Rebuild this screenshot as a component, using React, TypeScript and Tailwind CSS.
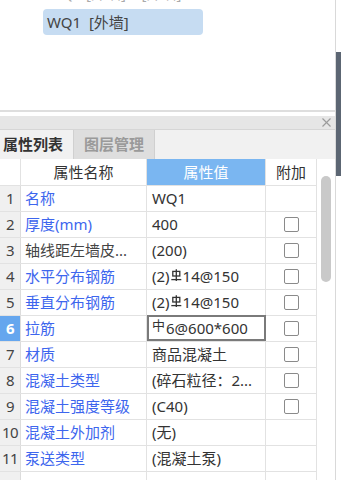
import React from "react";

const font = { fontFamily: '"Noto Sans", "Noto Sans CJK SC", sans-serif' };

function Rebar3() {
  return (
    <svg width="11" height="13" viewBox="0 0 11 13" className="inline-block -mt-[3px] mx-[1px]" fill="none" stroke="#333" strokeWidth="1.3">
      <rect x="1.8" y="2.4" width="7" height="4.6" />
      <line x1="5.3" y1="0.2" x2="5.3" y2="12" />
      <line x1="0.3" y1="10.6" x2="10.3" y2="10.6" />
    </svg>
  );
}

type Row = { name: string; value: React.ReactNode; blue: boolean; check: boolean; sel?: boolean };

const rows: Row[] = [
  { name: "名称", value: "WQ1", blue: true, check: false },
  { name: "厚度(mm)", value: "400", blue: true, check: true },
  { name: "轴线距左墙皮...", value: "(200)", blue: false, check: true },
  { name: "水平分布钢筋", value: <>(2)<Rebar3 />14@150</>, blue: true, check: true },
  { name: "垂直分布钢筋", value: <>(2)<Rebar3 />14@150</>, blue: true, check: true },
  { name: "拉筋", value: <><span className="text-[13px] relative -top-[2px] mr-[1px]">中</span>6@600*600</>, blue: true, check: true, sel: true },
  { name: "材质", value: "商品混凝土", blue: true, check: true },
  { name: "混凝土类型", value: "(碎石粒径：2...", blue: true, check: true },
  { name: "混凝土强度等级", value: "(C40)", blue: true, check: true },
  { name: "混凝土外加剂", value: "(无)", blue: true, check: false },
  { name: "泵送类型", value: "(混凝土泵)", blue: true, check: false },
];

export default function App() {
  return (
    <div className="w-[341px] h-[480px] overflow-hidden bg-white flex text-[15px] text-[#333]" style={font}>
      <div className="w-[335px] flex flex-col">
        {/* tree area */}
        <div className="h-[110px] shrink-0 bg-white">
          <div className="h-[3px] overflow-hidden">
            <div className="pl-[48px] -mt-[17px] leading-[20px] text-[#aaa]">WQ2 [外墙] &nbsp; &nbsp;[外墙]</div>
          </div>
          <div className="ml-[43px] mt-[6px] w-[160px] h-[26px] rounded-[4px] bg-[#c6dcf2] pl-[4px] leading-[26px] text-[#444]">
            WQ1&nbsp; [外墙]
          </div>
        </div>
        <div className="h-[2px] bg-[#dedede] shrink-0" />
        <div className="h-[4px] bg-white shrink-0" />
        {/* panel title bar */}
        <div className="h-[14px] bg-[#e6e6e6] border-b border-[#d6d6d6] flex items-center justify-end pr-[4px] shrink-0">
          <svg width="9" height="9" viewBox="0 0 9 9" stroke="#9a9a9a" strokeWidth="1.1">
            <line x1="0.5" y1="0.5" x2="8.5" y2="8.5" />
            <line x1="8.5" y1="0.5" x2="0.5" y2="8.5" />
          </svg>
        </div>
        {/* tabs */}
        <div className="h-[29px] bg-[#f1f1f1] flex items-stretch shrink-0" style={{ fontFamily: '"Noto Sans CJK SC", sans-serif' }}>
          <div className="w-[73px] flex items-center pl-[3px] font-bold text-[#333] bg-[#f1f1f1]">属性列表</div>
          <div className="w-[82px] flex items-center justify-center font-bold text-[#9a9a9a] bg-[#dedede] border-l border-r border-[#d0d0d0]">图层管理</div>
        </div>
        {/* table */}
        <div className="flex flex-1 min-h-0">
          <div className="w-[317px] border-r border-[#e2e2e2]">
            <div className="grid grid-cols-[21px_126px_119px_50px] h-[27px] border-b border-[#e2e2e2]" style={{ fontFamily: '"Noto Sans CJK SC", sans-serif' }}>
              <div className="border-r border-[#e2e2e2] bg-white" />
              <div className="border-r border-[#e2e2e2] flex items-center justify-center">属性名称</div>
              <div className="border-r border-[#e2e2e2] bg-[#7ab6f1] text-white flex items-center justify-center">属性值</div>
              <div className="flex items-center justify-center">附加</div>
            </div>
            {rows.map((r, i) => (
              <div key={i} className="grid grid-cols-[21px_126px_119px_50px] h-[26px] border-b border-[#e2e2e2]">
                <div
                  className={
                    "border-r border-[#dcdcdc] flex items-center justify-center tracking-[-0.5px] " +
                    (r.sel ? "bg-[#65a6ee] text-white font-bold" : "bg-[#f0f0f0] text-[#444]")
                  }
                >
                  {i + 1}
                </div>
                <div className={"border-r border-[#e2e2e2] flex items-center pl-[4px] whitespace-nowrap overflow-hidden " + (r.blue ? "text-[#3d66ee]" : "text-[#444]")}>
                  {r.name}
                </div>
                <div
                  className={
                    "flex items-center whitespace-nowrap overflow-hidden " +
                    (r.sel ? "border-2 border-[#7a7a7a] pl-[3px] -mt-px" : "border-r border-[#e2e2e2] pl-[5px]")
                  }
                >
                  {r.value}
                </div>
                <div className="flex items-center justify-center">
                  {r.check && <div className="w-[15px] h-[15px] border-[1.5px] border-[#8a8a8a] rounded-[2px] bg-white" />}
                </div>
              </div>
            ))}
            <div className="grid grid-cols-[21px_126px_119px_50px] h-[26px]">
              <div className="border-r border-[#dcdcdc] bg-[#f0f0f0]" />
              <div className="border-r border-[#e2e2e2]" />
              <div className="border-r border-[#e2e2e2]" />
              <div />
            </div>
          </div>
          <div className="flex-1 bg-white pt-[17px] pl-[4px]">
            <div className="w-[10px] h-[106px] rounded-full bg-[#c9c9c9]" />
          </div>
        </div>
      </div>
      <div className="w-px bg-[#d9d9d9]" />
      <div className="flex-1 flex flex-col">
        <div className="h-[52px]" />
        <div className="h-[124px] bg-[#5c6673]" />
      </div>
    </div>
  );
}
